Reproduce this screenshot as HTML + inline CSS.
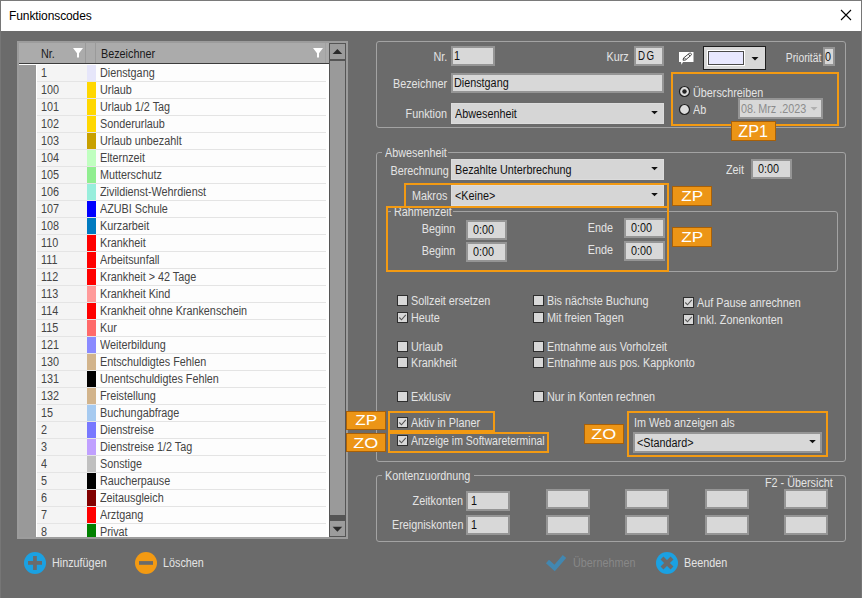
<!DOCTYPE html>
<html><head><meta charset="utf-8"><title>Funktionscodes</title>
<style>
*{margin:0;padding:0;box-sizing:border-box}
html,body{width:862px;height:598px;overflow:hidden}
body{background:#6b6b6b;position:relative;font-family:"Liberation Sans",sans-serif;font-size:12px;letter-spacing:0px;color:#f0f0f0}
.a{position:absolute}
.t{position:absolute;white-space:nowrap;line-height:13px;transform:scaleX(0.9);transform-origin:0 0}
svg.a{display:block}
.lbl{position:absolute;background:#ec9516;border:1px solid #a86008;color:#fff;text-align:center;letter-spacing:0}
</style></head><body>
<div class="a" style="left:0px;top:0px;width:862px;height:1px;background:#7a7a7a"></div>
<div class="a" style="left:0px;top:0px;width:1px;height:598px;background:#767676"></div>
<div class="a" style="left:861px;top:0px;width:1px;height:598px;background:#767676"></div>
<div class="a" style="left:1px;top:1px;width:860px;height:30px;background:#fff"></div>
<div class="t" style="left:9px;top:9px;font-size:12px;letter-spacing:-0.1px;color:#000;line-height:14px;transform:none">Funktionscodes</div>
<svg class="a" style="left:838px;top:7px" width="16" height="16" viewBox="0 0 16 16"><path d="M3 3 L13 13 M13 3 L3 13" stroke="#000" stroke-width="1.1"/></svg>
<div class="a" style="left:17px;top:41px;width:331px;height:498px;background:#9c9c9c"></div>
<div class="a" style="left:19px;top:43px;width:310px;height:20px;background:#ababab"></div>
<div class="a" style="left:85px;top:43px;width:1px;height:20px;background:#9a9a9a"></div>
<div class="a" style="left:95px;top:43px;width:1px;height:20px;background:#9a9a9a"></div>
<div class="a" style="left:325px;top:43px;width:1px;height:20px;background:#a2a2a2"></div>
<div class="a" style="left:19px;top:63px;width:310px;height:1px;background:#3c3c3c"></div>
<div class="a" style="left:19px;top:64px;width:310px;height:1px;background:#fff"></div>
<div class="a" style="left:19px;top:65px;width:17px;height:472px;background:#999"></div>
<div class="a" style="left:36px;top:65px;width:293px;height:472px;background:#fff"></div>
<div class="t" style="left:41px;top:47.5px;color:#1a1a1a;">Nr.</div>
<div class="t" style="left:101px;top:47.5px;color:#1a1a1a;">Bezeichner</div>
<svg class="a" style="left:73px;top:48.3px" width="11" height="11" viewBox="0 0 11 11"><path d="M0 0 H10 L6 5.2 V9.5 H4 V5.2 Z" fill="#fff"/></svg>
<svg class="a" style="left:313px;top:48.3px" width="11" height="11" viewBox="0 0 11 11"><path d="M0 0 H10 L6 5.2 V9.5 H4 V5.2 Z" fill="#fff"/></svg>
<div class="a" style="left:37px;top:65px;width:289px;height:472px;overflow:hidden">
<div class="a" style="left:0px;top:0px;width:50px;height:16px;background:#f4f4f4"></div>
<div class="a" style="left:59px;top:0px;width:230px;height:16px;background:#fdfdfd"></div>
<div class="a" style="left:0px;top:16px;width:289px;height:1px;background:#e4e4e4"></div>
<div class="a" style="left:50px;top:0px;width:9px;height:16px;background:#e6e6fa"></div>
<div class="t" style="left:4px;top:1.5px;color:#444;">1</div>
<div class="t" style="left:63px;top:1.5px;color:#444;">Dienstgang</div>
<div class="a" style="left:0px;top:17px;width:50px;height:16px;background:#f4f4f4"></div>
<div class="a" style="left:59px;top:17px;width:230px;height:16px;background:#fdfdfd"></div>
<div class="a" style="left:0px;top:33px;width:289px;height:1px;background:#e4e4e4"></div>
<div class="a" style="left:50px;top:17px;width:9px;height:16px;background:#ffd700"></div>
<div class="t" style="left:4px;top:18.5px;color:#444;">100</div>
<div class="t" style="left:63px;top:18.5px;color:#444;">Urlaub</div>
<div class="a" style="left:0px;top:34px;width:50px;height:16px;background:#f4f4f4"></div>
<div class="a" style="left:59px;top:34px;width:230px;height:16px;background:#fdfdfd"></div>
<div class="a" style="left:0px;top:50px;width:289px;height:1px;background:#e4e4e4"></div>
<div class="a" style="left:50px;top:34px;width:9px;height:16px;background:#ffd700"></div>
<div class="t" style="left:4px;top:35.5px;color:#444;">101</div>
<div class="t" style="left:63px;top:35.5px;color:#444;">Urlaub 1/2 Tag</div>
<div class="a" style="left:0px;top:51px;width:50px;height:16px;background:#f4f4f4"></div>
<div class="a" style="left:59px;top:51px;width:230px;height:16px;background:#fdfdfd"></div>
<div class="a" style="left:0px;top:67px;width:289px;height:1px;background:#e4e4e4"></div>
<div class="a" style="left:50px;top:51px;width:9px;height:16px;background:#ffd700"></div>
<div class="t" style="left:4px;top:52.5px;color:#444;">102</div>
<div class="t" style="left:63px;top:52.5px;color:#444;">Sonderurlaub</div>
<div class="a" style="left:0px;top:68px;width:50px;height:16px;background:#f4f4f4"></div>
<div class="a" style="left:59px;top:68px;width:230px;height:16px;background:#fdfdfd"></div>
<div class="a" style="left:0px;top:84px;width:289px;height:1px;background:#e4e4e4"></div>
<div class="a" style="left:50px;top:68px;width:9px;height:16px;background:#c8a000"></div>
<div class="t" style="left:4px;top:69.5px;color:#444;">103</div>
<div class="t" style="left:63px;top:69.5px;color:#444;">Urlaub unbezahlt</div>
<div class="a" style="left:0px;top:85px;width:50px;height:16px;background:#f4f4f4"></div>
<div class="a" style="left:59px;top:85px;width:230px;height:16px;background:#fdfdfd"></div>
<div class="a" style="left:0px;top:101px;width:289px;height:1px;background:#e4e4e4"></div>
<div class="a" style="left:50px;top:85px;width:9px;height:16px;background:#c0ffc0"></div>
<div class="t" style="left:4px;top:86.5px;color:#444;">104</div>
<div class="t" style="left:63px;top:86.5px;color:#444;">Elternzeit</div>
<div class="a" style="left:0px;top:102px;width:50px;height:16px;background:#f4f4f4"></div>
<div class="a" style="left:59px;top:102px;width:230px;height:16px;background:#fdfdfd"></div>
<div class="a" style="left:0px;top:118px;width:289px;height:1px;background:#e4e4e4"></div>
<div class="a" style="left:50px;top:102px;width:9px;height:16px;background:#90ee90"></div>
<div class="t" style="left:4px;top:103.5px;color:#444;">105</div>
<div class="t" style="left:63px;top:103.5px;color:#444;">Mutterschutz</div>
<div class="a" style="left:0px;top:119px;width:50px;height:16px;background:#f4f4f4"></div>
<div class="a" style="left:59px;top:119px;width:230px;height:16px;background:#fdfdfd"></div>
<div class="a" style="left:0px;top:135px;width:289px;height:1px;background:#e4e4e4"></div>
<div class="a" style="left:50px;top:119px;width:9px;height:16px;background:#98eedc"></div>
<div class="t" style="left:4px;top:120.5px;color:#444;">106</div>
<div class="t" style="left:63px;top:120.5px;color:#444;">Zivildienst-Wehrdienst</div>
<div class="a" style="left:0px;top:136px;width:50px;height:16px;background:#f4f4f4"></div>
<div class="a" style="left:59px;top:136px;width:230px;height:16px;background:#fdfdfd"></div>
<div class="a" style="left:0px;top:152px;width:289px;height:1px;background:#e4e4e4"></div>
<div class="a" style="left:50px;top:136px;width:9px;height:16px;background:#0000ff"></div>
<div class="t" style="left:4px;top:137.5px;color:#444;">107</div>
<div class="t" style="left:63px;top:137.5px;color:#444;">AZUBI Schule</div>
<div class="a" style="left:0px;top:153px;width:50px;height:16px;background:#f4f4f4"></div>
<div class="a" style="left:59px;top:153px;width:230px;height:16px;background:#fdfdfd"></div>
<div class="a" style="left:0px;top:169px;width:289px;height:1px;background:#e4e4e4"></div>
<div class="a" style="left:50px;top:153px;width:9px;height:16px;background:#007ac0"></div>
<div class="t" style="left:4px;top:154.5px;color:#444;">108</div>
<div class="t" style="left:63px;top:154.5px;color:#444;">Kurzarbeit</div>
<div class="a" style="left:0px;top:170px;width:50px;height:16px;background:#f4f4f4"></div>
<div class="a" style="left:59px;top:170px;width:230px;height:16px;background:#fdfdfd"></div>
<div class="a" style="left:0px;top:186px;width:289px;height:1px;background:#e4e4e4"></div>
<div class="a" style="left:50px;top:170px;width:9px;height:16px;background:#ff0000"></div>
<div class="t" style="left:4px;top:171.5px;color:#444;">110</div>
<div class="t" style="left:63px;top:171.5px;color:#444;">Krankheit</div>
<div class="a" style="left:0px;top:187px;width:50px;height:16px;background:#f4f4f4"></div>
<div class="a" style="left:59px;top:187px;width:230px;height:16px;background:#fdfdfd"></div>
<div class="a" style="left:0px;top:203px;width:289px;height:1px;background:#e4e4e4"></div>
<div class="a" style="left:50px;top:187px;width:9px;height:16px;background:#ff0000"></div>
<div class="t" style="left:4px;top:188.5px;color:#444;">111</div>
<div class="t" style="left:63px;top:188.5px;color:#444;">Arbeitsunfall</div>
<div class="a" style="left:0px;top:204px;width:50px;height:16px;background:#f4f4f4"></div>
<div class="a" style="left:59px;top:204px;width:230px;height:16px;background:#fdfdfd"></div>
<div class="a" style="left:0px;top:220px;width:289px;height:1px;background:#e4e4e4"></div>
<div class="a" style="left:50px;top:204px;width:9px;height:16px;background:#ff0000"></div>
<div class="t" style="left:4px;top:205.5px;color:#444;">112</div>
<div class="t" style="left:63px;top:205.5px;color:#444;">Krankheit &gt; 42 Tage</div>
<div class="a" style="left:0px;top:221px;width:50px;height:16px;background:#f4f4f4"></div>
<div class="a" style="left:59px;top:221px;width:230px;height:16px;background:#fdfdfd"></div>
<div class="a" style="left:0px;top:237px;width:289px;height:1px;background:#e4e4e4"></div>
<div class="a" style="left:50px;top:221px;width:9px;height:16px;background:#ff9a9a"></div>
<div class="t" style="left:4px;top:222.5px;color:#444;">113</div>
<div class="t" style="left:63px;top:222.5px;color:#444;">Krankheit Kind</div>
<div class="a" style="left:0px;top:238px;width:50px;height:16px;background:#f4f4f4"></div>
<div class="a" style="left:59px;top:238px;width:230px;height:16px;background:#fdfdfd"></div>
<div class="a" style="left:0px;top:254px;width:289px;height:1px;background:#e4e4e4"></div>
<div class="a" style="left:50px;top:238px;width:9px;height:16px;background:#ff0000"></div>
<div class="t" style="left:4px;top:239.5px;color:#444;">114</div>
<div class="t" style="left:63px;top:239.5px;color:#444;">Krankheit ohne Krankenschein</div>
<div class="a" style="left:0px;top:255px;width:50px;height:16px;background:#f4f4f4"></div>
<div class="a" style="left:59px;top:255px;width:230px;height:16px;background:#fdfdfd"></div>
<div class="a" style="left:0px;top:271px;width:289px;height:1px;background:#e4e4e4"></div>
<div class="a" style="left:50px;top:255px;width:9px;height:16px;background:#ff6a6a"></div>
<div class="t" style="left:4px;top:256.5px;color:#444;">115</div>
<div class="t" style="left:63px;top:256.5px;color:#444;">Kur</div>
<div class="a" style="left:0px;top:272px;width:50px;height:16px;background:#f4f4f4"></div>
<div class="a" style="left:59px;top:272px;width:230px;height:16px;background:#fdfdfd"></div>
<div class="a" style="left:0px;top:288px;width:289px;height:1px;background:#e4e4e4"></div>
<div class="a" style="left:50px;top:272px;width:9px;height:16px;background:#8a8aff"></div>
<div class="t" style="left:4px;top:273.5px;color:#444;">121</div>
<div class="t" style="left:63px;top:273.5px;color:#444;">Weiterbildung</div>
<div class="a" style="left:0px;top:289px;width:50px;height:16px;background:#f4f4f4"></div>
<div class="a" style="left:59px;top:289px;width:230px;height:16px;background:#fdfdfd"></div>
<div class="a" style="left:0px;top:305px;width:289px;height:1px;background:#e4e4e4"></div>
<div class="a" style="left:50px;top:289px;width:9px;height:16px;background:#d2b48c"></div>
<div class="t" style="left:4px;top:290.5px;color:#444;">130</div>
<div class="t" style="left:63px;top:290.5px;color:#444;">Entschuldigtes Fehlen</div>
<div class="a" style="left:0px;top:306px;width:50px;height:16px;background:#f4f4f4"></div>
<div class="a" style="left:59px;top:306px;width:230px;height:16px;background:#fdfdfd"></div>
<div class="a" style="left:0px;top:322px;width:289px;height:1px;background:#e4e4e4"></div>
<div class="a" style="left:50px;top:306px;width:9px;height:16px;background:#000000"></div>
<div class="t" style="left:4px;top:307.5px;color:#444;">131</div>
<div class="t" style="left:63px;top:307.5px;color:#444;">Unentschuldigtes Fehlen</div>
<div class="a" style="left:0px;top:323px;width:50px;height:16px;background:#f4f4f4"></div>
<div class="a" style="left:59px;top:323px;width:230px;height:16px;background:#fdfdfd"></div>
<div class="a" style="left:0px;top:339px;width:289px;height:1px;background:#e4e4e4"></div>
<div class="a" style="left:50px;top:323px;width:9px;height:16px;background:#d2b48c"></div>
<div class="t" style="left:4px;top:324.5px;color:#444;">132</div>
<div class="t" style="left:63px;top:324.5px;color:#444;">Freistellung</div>
<div class="a" style="left:0px;top:340px;width:50px;height:16px;background:#f4f4f4"></div>
<div class="a" style="left:59px;top:340px;width:230px;height:16px;background:#fdfdfd"></div>
<div class="a" style="left:0px;top:356px;width:289px;height:1px;background:#e4e4e4"></div>
<div class="a" style="left:50px;top:340px;width:9px;height:16px;background:#a6caf0"></div>
<div class="t" style="left:4px;top:341.5px;color:#444;">15</div>
<div class="t" style="left:63px;top:341.5px;color:#444;">Buchungabfrage</div>
<div class="a" style="left:0px;top:357px;width:50px;height:16px;background:#f4f4f4"></div>
<div class="a" style="left:59px;top:357px;width:230px;height:16px;background:#fdfdfd"></div>
<div class="a" style="left:0px;top:373px;width:289px;height:1px;background:#e4e4e4"></div>
<div class="a" style="left:50px;top:357px;width:9px;height:16px;background:#7878ff"></div>
<div class="t" style="left:4px;top:358.5px;color:#444;">2</div>
<div class="t" style="left:63px;top:358.5px;color:#444;">Dienstreise</div>
<div class="a" style="left:0px;top:374px;width:50px;height:16px;background:#f4f4f4"></div>
<div class="a" style="left:59px;top:374px;width:230px;height:16px;background:#fdfdfd"></div>
<div class="a" style="left:0px;top:390px;width:289px;height:1px;background:#e4e4e4"></div>
<div class="a" style="left:50px;top:374px;width:9px;height:16px;background:#c0a0ff"></div>
<div class="t" style="left:4px;top:375.5px;color:#444;">3</div>
<div class="t" style="left:63px;top:375.5px;color:#444;">Dienstreise 1/2 Tag</div>
<div class="a" style="left:0px;top:391px;width:50px;height:16px;background:#f4f4f4"></div>
<div class="a" style="left:59px;top:391px;width:230px;height:16px;background:#fdfdfd"></div>
<div class="a" style="left:0px;top:407px;width:289px;height:1px;background:#e4e4e4"></div>
<div class="a" style="left:50px;top:391px;width:9px;height:16px;background:#c0c0c0"></div>
<div class="t" style="left:4px;top:392.5px;color:#444;">4</div>
<div class="t" style="left:63px;top:392.5px;color:#444;">Sonstige</div>
<div class="a" style="left:0px;top:408px;width:50px;height:16px;background:#f4f4f4"></div>
<div class="a" style="left:59px;top:408px;width:230px;height:16px;background:#fdfdfd"></div>
<div class="a" style="left:0px;top:424px;width:289px;height:1px;background:#e4e4e4"></div>
<div class="a" style="left:50px;top:408px;width:9px;height:16px;background:#000000"></div>
<div class="t" style="left:4px;top:409.5px;color:#444;">5</div>
<div class="t" style="left:63px;top:409.5px;color:#444;">Raucherpause</div>
<div class="a" style="left:0px;top:425px;width:50px;height:16px;background:#f4f4f4"></div>
<div class="a" style="left:59px;top:425px;width:230px;height:16px;background:#fdfdfd"></div>
<div class="a" style="left:0px;top:441px;width:289px;height:1px;background:#e4e4e4"></div>
<div class="a" style="left:50px;top:425px;width:9px;height:16px;background:#800000"></div>
<div class="t" style="left:4px;top:426.5px;color:#444;">6</div>
<div class="t" style="left:63px;top:426.5px;color:#444;">Zeitausgleich</div>
<div class="a" style="left:0px;top:442px;width:50px;height:16px;background:#f4f4f4"></div>
<div class="a" style="left:59px;top:442px;width:230px;height:16px;background:#fdfdfd"></div>
<div class="a" style="left:0px;top:458px;width:289px;height:1px;background:#e4e4e4"></div>
<div class="a" style="left:50px;top:442px;width:9px;height:16px;background:#ff0000"></div>
<div class="t" style="left:4px;top:443.5px;color:#444;">7</div>
<div class="t" style="left:63px;top:443.5px;color:#444;">Arztgang</div>
<div class="a" style="left:0px;top:459px;width:50px;height:16px;background:#f4f4f4"></div>
<div class="a" style="left:59px;top:459px;width:230px;height:16px;background:#fdfdfd"></div>
<div class="a" style="left:0px;top:475px;width:289px;height:1px;background:#e4e4e4"></div>
<div class="a" style="left:50px;top:459px;width:9px;height:16px;background:#008000"></div>
<div class="t" style="left:4px;top:460.5px;color:#444;">8</div>
<div class="t" style="left:63px;top:460.5px;color:#444;">Privat</div>
</div>
<div class="a" style="left:329px;top:43px;width:17px;height:494px;background:#555"></div>
<div class="a" style="left:330px;top:44px;width:15px;height:15px;background:#9c9c9c"></div>
<div class="a" style="left:330px;top:61px;width:15px;height:454px;background:#9a9a9a"></div>
<div class="a" style="left:330px;top:521px;width:15px;height:15px;background:#9c9c9c"></div>
<svg class="a" style="left:330px;top:44px" width="15" height="15" viewBox="0 0 15 15"><path d="M2.6 10 H12.2 L7.4 5 Z" fill="#2a2a2a"/></svg>
<svg class="a" style="left:330px;top:521px" width="15" height="15" viewBox="0 0 15 15"><path d="M2.6 5.8 H12.2 L7.4 10.8 Z" fill="#2a2a2a"/></svg>
<div class="a" style="left:376px;top:41px;width:470px;height:87px;border:1px solid #a3a3a3;border-radius:3px"></div>
<div class="t" style="right:415px;top:50.5px;transform-origin:100% 0;color:#e4e4e4;">Nr.</div>
<div class="a" style="left:451px;top:46px;width:44px;height:20px;background:#d8d8d8;border:2px solid #959595"></div><div class="t" style="left:454px;top:49.5px;color:#111;">1</div>
<div class="t" style="right:233px;top:50.5px;transform-origin:100% 0;color:#e4e4e4;">Kurz</div>
<div class="a" style="left:634px;top:46px;width:30px;height:20px;background:#d8d8d8;border:2px solid #959595"></div>
<div class="t" style="left:637.5px;top:50.0px;color:#111;transform:scaleX(0.78);letter-spacing:2px;font-size:12.5px;">DG</div>
<svg class="a" style="left:678px;top:51px" width="17" height="15" viewBox="0 0 17 15"><path d="M1 1 H15.5 V11 H5 L3.5 13.8 L3 11 H1 Z" fill="#fff"/><path d="M5 9.2 L5.6 7 L11.2 2.4 Q12.4 1.6 13.2 2.6 Q13.9 3.6 12.8 4.5 L7.3 9.1 Z M6.2 6.6 L8 8.5 M10.4 3.2 L12.1 5.1" stroke="#333" stroke-width="0.9" fill="none"/></svg>
<div class="a" style="left:703px;top:46px;width:63px;height:24px;background:#d8d8d8;border:1px solid #1e1e1e"></div>
<div class="a" style="left:707px;top:50px;width:38px;height:16px;background:#e8e8ff;border:1px solid #fff;box-shadow:inset 0 0 0 1px #4a4a4a"></div>
<svg class="a" style="left:751px;top:57px" width="8" height="4" viewBox="0 0 8 4"><path d="M0.5 0 H7.5 L4 3.5 Z" fill="#111"/></svg>
<div class="t" style="right:41px;top:51.5px;transform-origin:100% 0;color:#e4e4e4;transform:scaleX(0.86);">Priorität</div>
<div class="a" style="left:823px;top:47px;width:12px;height:19px;background:#d8d8d8;border:2px solid #959595"></div><div class="t" style="left:825px;top:50.5px;color:#111;">0</div>
<div class="t" style="right:415px;top:77.5px;transform-origin:100% 0;color:#e4e4e4;">Bezeichner</div>
<div class="a" style="left:451px;top:73px;width:213px;height:20px;background:#d8d8d8;border:2px solid #959595"></div><div class="t" style="left:454px;top:76.5px;color:#111;">Dienstgang</div>
<div class="t" style="right:415px;top:107.5px;transform-origin:100% 0;color:#e4e4e4;">Funktion</div>
<div class="a" style="left:451px;top:103px;width:213px;height:21px;background:#d6d6d6;border:1px solid #dcdcdc"></div><div class="t" style="left:455px;top:107.5px;color:#111;">Abwesenheit</div><svg class="a" style="left:650.5px;top:111px" width="7" height="4" viewBox="0 0 7 4"><path d="M0.2 0 H6.8 L3.5 3.3 Z" fill="#111"/></svg>
<div class="a" style="left:671px;top:72px;width:168px;height:54px;border:2px solid #f39a12"></div>
<svg class="a" style="left:678px;top:85px" width="13" height="13" viewBox="0 0 13 13"><circle cx="6.5" cy="6.5" r="5" fill="#dcdcdc" stroke="#1e1e1e" stroke-width="1.2"/><circle cx="6.5" cy="6.5" r="2.2" fill="#222"/></svg>
<svg class="a" style="left:678px;top:103px" width="13" height="13" viewBox="0 0 13 13"><circle cx="6.5" cy="6.5" r="5" fill="#dcdcdc" stroke="#1e1e1e" stroke-width="1.2"/></svg>
<div class="t" style="left:693px;top:86.5px;color:#e4e4e4;">Überschreiben</div>
<div class="t" style="left:693px;top:103.5px;color:#e4e4e4;">Ab</div>
<div class="a" style="left:738px;top:98px;width:85px;height:21px;background:#d8d8d8;border:2px solid #959595"></div>
<div class="t" style="left:741px;top:102.5px;color:#8c8c8c;">08.&#8201;Mrz .2023</div>
<svg class="a" style="left:810px;top:107px" width="8" height="4" viewBox="0 0 8 4"><path d="M0.5 0 H7.5 L4 3.5 Z" fill="#b0b0b0"/></svg>
<div class="a lbl" style="left:731px;top:121px;width:45px;height:20px;line-height:18px;font-size:16.5px"><span style="display:inline-block;transform:scaleX(0.98)">ZP1</span></div>
<div class="a" style="left:376px;top:152px;width:470px;height:310px;border:1px solid #a3a3a3;border-radius:3px"></div><div class="a" style="left:382px;top:150px;width:66px;height:4px;background:#6b6b6b"></div>
<div class="t" style="left:385px;top:146.5px;color:#e4e4e4;">Abwesenheit</div>
<div class="t" style="right:413px;top:164.5px;transform-origin:100% 0;color:#e4e4e4;">Berechnung</div>
<div class="a" style="left:451px;top:159px;width:213px;height:21px;background:#d6d6d6;border:1px solid #dcdcdc"></div><div class="t" style="left:455px;top:163.5px;color:#111;">Bezahlte Unterbrechung</div><svg class="a" style="left:650.5px;top:167px" width="7" height="4" viewBox="0 0 7 4"><path d="M0.2 0 H6.8 L3.5 3.3 Z" fill="#111"/></svg>
<div class="t" style="right:118px;top:163.5px;transform-origin:100% 0;color:#e4e4e4;">Zeit</div>
<div class="a" style="left:751px;top:159px;width:41px;height:20px;background:#d8d8d8;border:2px solid #959595"></div><div class="t" style="left:757.5px;top:162.5px;color:#111;">0:00</div>
<div class="a" style="left:404px;top:183px;width:265px;height:25px;border:2px solid #f39a12"></div>
<div class="t" style="right:415px;top:189.5px;transform-origin:100% 0;color:#e4e4e4;">Makros</div>
<div class="a" style="left:451px;top:185px;width:213px;height:21px;background:#d6d6d6;border:1px solid #dcdcdc"></div><div class="t" style="left:455px;top:189.5px;color:#111;">&lt;Keine&gt;</div><svg class="a" style="left:650.5px;top:193px" width="7" height="4" viewBox="0 0 7 4"><path d="M0.2 0 H6.8 L3.5 3.3 Z" fill="#111"/></svg>
<div class="a lbl" style="left:672px;top:186px;width:40px;height:20px;line-height:18px;font-size:14.5px"><span style="display:inline-block;transform:scaleX(1.18)">ZP</span></div>
<div class="a" style="left:386px;top:211px;width:452px;height:61px;border:1px solid #a3a3a3;border-radius:3px"></div><div class="a" style="left:391px;top:209px;width:62px;height:4px;background:#6b6b6b"></div>
<div class="t" style="left:394px;top:205.5px;color:#e4e4e4;">Rahmenzeit</div>
<div class="a" style="left:386px;top:206px;width:283px;height:66px;border:2px solid #f39a12"></div>
<div class="t" style="right:407px;top:222.5px;transform-origin:100% 0;color:#e4e4e4;">Beginn</div>
<div class="a" style="left:466px;top:220px;width:41px;height:20px;background:#d8d8d8;border:2px solid #959595"></div><div class="t" style="left:472.5px;top:223.5px;color:#111;">0:00</div>
<div class="t" style="right:407px;top:244.5px;transform-origin:100% 0;color:#e4e4e4;">Beginn</div>
<div class="a" style="left:466px;top:242px;width:41px;height:20px;background:#d8d8d8;border:2px solid #959595"></div><div class="t" style="left:472.5px;top:245.5px;color:#111;">0:00</div>
<div class="t" style="right:249px;top:221.5px;transform-origin:100% 0;color:#e4e4e4;">Ende</div>
<div class="a" style="left:624px;top:218px;width:41px;height:20px;background:#d8d8d8;border:2px solid #959595"></div><div class="t" style="left:630.5px;top:221.5px;color:#111;">0:00</div>
<div class="t" style="right:249px;top:243.5px;transform-origin:100% 0;color:#e4e4e4;">Ende</div>
<div class="a" style="left:624px;top:241px;width:41px;height:20px;background:#d8d8d8;border:2px solid #959595"></div><div class="t" style="left:630.5px;top:244.5px;color:#111;">0:00</div>
<div class="a lbl" style="left:672px;top:227px;width:40px;height:20px;line-height:18px;font-size:14.5px"><span style="display:inline-block;transform:scaleX(1.18)">ZP</span></div>
<div class="a" style="left:397px;top:295px;width:11px;height:11px;background:#d8d8d8;border:1px solid #2e2e2e"></div>
<div class="t" style="left:411px;top:294.5px;color:#e4e4e4;">Sollzeit ersetzen</div>
<div class="a" style="left:397px;top:312px;width:11px;height:11px;background:#d8d8d8;border:1px solid #2e2e2e"></div><svg class="a" style="left:397px;top:312px" width="11" height="11" viewBox="0 0 11 11"><path d="M2.3 5.5 L4.5 7.8 L8.8 2.8" stroke="#555" stroke-width="1.1" fill="none"/></svg>
<div class="t" style="left:411px;top:311.5px;color:#e4e4e4;">Heute</div>
<div class="a" style="left:397px;top:341px;width:11px;height:11px;background:#d8d8d8;border:1px solid #2e2e2e"></div>
<div class="t" style="left:411px;top:340.5px;color:#e4e4e4;">Urlaub</div>
<div class="a" style="left:397px;top:357px;width:11px;height:11px;background:#d8d8d8;border:1px solid #2e2e2e"></div>
<div class="t" style="left:411px;top:356.5px;color:#e4e4e4;">Krankheit</div>
<div class="a" style="left:397px;top:391px;width:11px;height:11px;background:#d8d8d8;border:1px solid #2e2e2e"></div>
<div class="t" style="left:411px;top:390.5px;color:#e4e4e4;">Exklusiv</div>
<div class="a" style="left:397px;top:417px;width:11px;height:11px;background:#d8d8d8;border:1px solid #2e2e2e"></div><svg class="a" style="left:397px;top:417px" width="11" height="11" viewBox="0 0 11 11"><path d="M2.3 5.5 L4.5 7.8 L8.8 2.8" stroke="#555" stroke-width="1.1" fill="none"/></svg>
<div class="t" style="left:411px;top:416.5px;color:#e4e4e4;">Aktiv in Planer</div>
<div class="a" style="left:397px;top:435px;width:11px;height:11px;background:#d8d8d8;border:1px solid #2e2e2e"></div><svg class="a" style="left:397px;top:435px" width="11" height="11" viewBox="0 0 11 11"><path d="M2.3 5.5 L4.5 7.8 L8.8 2.8" stroke="#555" stroke-width="1.1" fill="none"/></svg>
<div class="t" style="left:411px;top:434.5px;color:#e4e4e4;transform:scaleX(0.875);">Anzeige im Softwareterminal</div>
<div class="a" style="left:533px;top:295px;width:11px;height:11px;background:#d8d8d8;border:1px solid #2e2e2e"></div>
<div class="t" style="left:547px;top:294.5px;color:#e4e4e4;">Bis nächste Buchung</div>
<div class="a" style="left:533px;top:312px;width:11px;height:11px;background:#d8d8d8;border:1px solid #2e2e2e"></div>
<div class="t" style="left:547px;top:311.5px;color:#e4e4e4;">Mit freien Tagen</div>
<div class="a" style="left:533px;top:341px;width:11px;height:11px;background:#d8d8d8;border:1px solid #2e2e2e"></div>
<div class="t" style="left:547px;top:340.5px;color:#e4e4e4;">Entnahme aus Vorholzeit</div>
<div class="a" style="left:533px;top:357px;width:11px;height:11px;background:#d8d8d8;border:1px solid #2e2e2e"></div>
<div class="t" style="left:547px;top:356.5px;color:#e4e4e4;">Entnahme aus pos. Kappkonto</div>
<div class="a" style="left:533px;top:391px;width:11px;height:11px;background:#d8d8d8;border:1px solid #2e2e2e"></div>
<div class="t" style="left:547px;top:390.5px;color:#e4e4e4;">Nur in Konten rechnen</div>
<div class="a" style="left:683px;top:297px;width:11px;height:11px;background:#d8d8d8;border:1px solid #2e2e2e"></div><svg class="a" style="left:683px;top:297px" width="11" height="11" viewBox="0 0 11 11"><path d="M2.3 5.5 L4.5 7.8 L8.8 2.8" stroke="#555" stroke-width="1.1" fill="none"/></svg>
<div class="t" style="left:697px;top:296.5px;color:#e4e4e4;">Auf Pause anrechnen</div>
<div class="a" style="left:683px;top:314px;width:11px;height:11px;background:#d8d8d8;border:1px solid #2e2e2e"></div><svg class="a" style="left:683px;top:314px" width="11" height="11" viewBox="0 0 11 11"><path d="M2.3 5.5 L4.5 7.8 L8.8 2.8" stroke="#555" stroke-width="1.1" fill="none"/></svg>
<div class="t" style="left:697px;top:313.5px;color:#e4e4e4;">Inkl. Zonenkonten</div>
<div class="a" style="left:388px;top:411px;width:107px;height:21px;border:2px solid #f39a12"></div>
<div class="a" style="left:388px;top:432px;width:161px;height:21px;border:2px solid #f39a12"></div>
<div class="a lbl" style="left:346px;top:411px;width:40px;height:19px;line-height:17px;font-size:14.5px"><span style="display:inline-block;transform:scaleX(1.18)">ZP</span></div>
<div class="a lbl" style="left:346px;top:433px;width:40px;height:19px;line-height:17px;font-size:15.5px"><span style="display:inline-block;transform:scaleX(1.16)">ZO</span></div>
<div class="a" style="left:627px;top:411px;width:201px;height:46px;border:2px solid #f39a12"></div>
<div class="t" style="left:634px;top:416.5px;color:#e4e4e4;">Im Web anzeigen als</div>
<div class="a" style="left:633px;top:432px;width:189px;height:21px;background:#d8d8d8;border:2px solid #959595"></div><div class="t" style="left:637px;top:436.5px;color:#111;">&lt;Standard&gt;</div><svg class="a" style="left:808.5px;top:440px" width="7" height="4" viewBox="0 0 7 4"><path d="M0.2 0 H6.8 L3.5 3.3 Z" fill="#111"/></svg>
<div class="a lbl" style="left:584px;top:424px;width:40px;height:20px;line-height:18px;font-size:15.5px"><span style="display:inline-block;transform:scaleX(1.16)">ZO</span></div>
<div class="a" style="left:376px;top:475px;width:470px;height:67px;border:1px solid #a3a3a3;border-radius:3px"></div><div class="a" style="left:382px;top:473px;width:92px;height:4px;background:#6b6b6b"></div>
<div class="t" style="left:385px;top:469.5px;color:#e4e4e4;">Kontenzuordnung</div>
<div class="t" style="left:765px;top:476.5px;color:#e4e4e4;">F2 - Übersicht</div>
<div class="t" style="right:399px;top:494.5px;transform-origin:100% 0;color:#e4e4e4;">Zeitkonten</div>
<div class="a" style="left:466px;top:491px;width:44px;height:20px;background:#d8d8d8;border:2px solid #959595"></div><div class="t" style="left:470.5px;top:494.5px;color:#111;">1</div>
<div class="t" style="right:399px;top:518.5px;transform-origin:100% 0;color:#e4e4e4;">Ereigniskonten</div>
<div class="a" style="left:466px;top:515px;width:44px;height:20px;background:#d8d8d8;border:2px solid #959595"></div><div class="t" style="left:470.5px;top:518.5px;color:#111;">1</div>
<div class="a" style="left:546px;top:489px;width:44px;height:20px;background:#d8d8d8;border:2px solid #959595"></div>
<div class="a" style="left:546px;top:515px;width:44px;height:20px;background:#d8d8d8;border:2px solid #959595"></div>
<div class="a" style="left:625px;top:489px;width:44px;height:20px;background:#d8d8d8;border:2px solid #959595"></div>
<div class="a" style="left:625px;top:515px;width:44px;height:20px;background:#d8d8d8;border:2px solid #959595"></div>
<div class="a" style="left:705px;top:489px;width:44px;height:20px;background:#d8d8d8;border:2px solid #959595"></div>
<div class="a" style="left:705px;top:515px;width:44px;height:20px;background:#d8d8d8;border:2px solid #959595"></div>
<div class="a" style="left:784px;top:489px;width:44px;height:20px;background:#d8d8d8;border:2px solid #959595"></div>
<div class="a" style="left:784px;top:515px;width:44px;height:20px;background:#d8d8d8;border:2px solid #959595"></div>
<svg class="a" style="left:23px;top:551px" width="24" height="24" viewBox="0 0 24 24"><circle cx="12" cy="12" r="11" fill="#1ba1e2"/><path d="M10.1 5 H13.8 V10.1 H19 V13.8 H13.8 V19 H10.1 V13.8 H5 V10.1 H10.1 Z" fill="#6b6b6b"/></svg>
<div class="t" style="left:52px;top:556.5px;color:#e4e4e4;">Hinzufügen</div>
<svg class="a" style="left:134px;top:551px" width="24" height="24" viewBox="0 0 24 24"><circle cx="12" cy="12" r="11" fill="#f39a12"/><rect x="5" y="10.1" width="14" height="3.7" fill="#6b6b6b"/></svg>
<div class="t" style="left:163px;top:556.5px;color:#e4e4e4;">Löschen</div>
<svg class="a" style="left:545px;top:553px" width="22" height="19" viewBox="0 0 22 19"><path d="M2.5 8.5 L9.6 15 L19.5 3.5" stroke="#4287b0" stroke-width="4.5" fill="none"/></svg>
<div class="t" style="left:573px;top:556.5px;color:#888;">Übernehmen</div>
<svg class="a" style="left:655px;top:551px" width="24" height="24" viewBox="0 0 24 24"><circle cx="12" cy="12" r="11" fill="#1ba1e2"/><path d="M7 7 L17 17 M17 7 L7 17" stroke="#6b6b6b" stroke-width="4"/></svg>
<div class="t" style="left:684px;top:556.5px;color:#e4e4e4;">Beenden</div>
</body></html>
